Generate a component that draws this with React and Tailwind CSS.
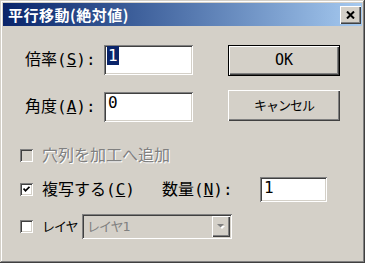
import React from "react";

const ui = "font-['DejaVu_Sans_Mono','Noto_Sans_CJK_JP',monospace]";
const sunken =
  "shadow-[inset_1px_1px_#808080,inset_-1px_-1px_#ffffff,inset_2px_2px_#404040,inset_-2px_-2px_#d4d0c8]";
const raised =
  "shadow-[inset_1px_1px_#ffffff,inset_-1px_-1px_#404040,inset_-2px_-2px_#808080]";

function CheckBox({ checked, disabled }) {
  return (
    <div
      className={`w-[13px] h-[13px] shrink-0 flex items-center justify-center ${sunken} ${
        disabled ? "bg-[#d4d0c8]" : "bg-white"
      }`}
    >
      {checked && (
        <svg width="7" height="7" viewBox="0 0 7 7">
          <path d="M0.5 2.5 L2.5 4.8 L6.5 0.8" fill="none" stroke="#000" strokeWidth="1.8" />
        </svg>
      )}
    </div>
  );
}

function Field({ width, height, children }) {
  return (
    <div className={`${width} ${height} bg-white ${sunken} pl-[3px] pt-[2px] text-[16px] leading-[17px] text-black`}>
      {children}
    </div>
  );
}

export default function App() {
  return (
    <div
      className={`w-[365px] h-[263px] bg-[#d4d0c8] p-[3px] flex flex-col ${ui} shadow-[inset_-1px_-1px_#404040,inset_1px_1px_#d4d0c8,inset_-2px_-2px_#808080,inset_2px_2px_#ffffff]`}
    >
      {/* title bar */}
      <div className="h-[23px] shrink-0 flex items-center bg-linear-to-r from-[#0a246a] to-[#a6caf0] pl-[5px] pr-[1px]">
        <span className="font-['Noto_Sans_CJK_JP',sans-serif] font-bold text-[15px] text-white leading-none tracking-[0.5px]">
          平行移動(絶対値)
        </span>
        <div className={`ml-auto w-[21px] h-[18px] bg-[#d4d0c8] flex items-center justify-center ${raised}`}>
          <svg width="9" height="8" viewBox="0 0 9 8">
            <path d="M1 0.5 L8 7.5 M8 0.5 L1 7.5" stroke="#000" strokeWidth="2" />
          </svg>
        </div>
      </div>

      {/* body */}
      <div className="flex-1 flex flex-col">
        <div className="mt-[19px] flex">
          <div className="ml-[22px] flex flex-col">
            <div className="flex items-start">
              <div className="w-[79px] h-[30px] flex items-center text-[16px] text-black">
                倍率(<u>S</u>):
              </div>
              <Field width="w-[89px]" height="h-[30px]">
                <span className="bg-[#0a246a] text-white px-[1px]">1</span>
              </Field>
            </div>
            <div className="mt-[17px] flex items-start">
              <div className="w-[79px] h-[30px] flex items-center text-[16px] text-black">
                角度(<u>A</u>):
              </div>
              <Field width="w-[89px]" height="h-[30px]">
                <span className="px-[1px]">0</span>
              </Field>
            </div>
          </div>
          <div className="ml-[35px] flex flex-col">
            <div className="w-[112px] h-[31px] border border-black">
              <div className={`w-full h-full flex items-center justify-center text-[15px] text-black ${raised}`}>
                OK
              </div>
            </div>
            <div
              className={`mt-[14px] w-[112px] h-[31px] flex items-center justify-center text-[13px] tracking-[-1px] text-black ${raised}`}
            >
              キャンセル
            </div>
          </div>
        </div>

        {/* checkbox rows */}
        <div className="mt-[21px] ml-[17px] h-[25px] flex items-center">
          <CheckBox disabled />
          <span className="ml-[9px] text-[16px] text-[#808080] [text-shadow:1px_1px_0_#ffffff]">
            穴列を加工へ追加
          </span>
        </div>

        <div className="mt-[9px] ml-[17px] h-[25px] flex items-center">
          <CheckBox checked />
          <span className="ml-[9px] w-[120px] text-[16px] text-black">
            複写する(<u>C</u>)
          </span>
          <span className="w-[98px] text-[16px] text-black">
            数量(<u>N</u>):
          </span>
          <Field width="w-[67px]" height="h-[25px]">
            <span className="px-[1px]">1</span>
          </Field>
        </div>

        <div className="mt-[12px] ml-[17px] h-[25px] flex items-center">
          <CheckBox />
          <span className="ml-[9px] w-[40px] shrink-0 whitespace-nowrap text-[13px] tracking-[-1px] text-black">
            レイヤ
          </span>
          <div className={`w-[150px] h-[25px] bg-[#d4d0c8] ${sunken} p-[2px] flex`}>
            <span className="flex-1 pl-[3px] whitespace-nowrap text-[13px] tracking-[-1px] leading-[21px] text-[#808080]">
              レイヤ1
            </span>
            <div className={`w-[18px] h-full flex items-center justify-center ${raised}`}>
              <svg width="8" height="5" viewBox="0 0 8 5">
                <path d="M1 1 L7 1 L4 4 Z" fill="#ffffff" transform="translate(1 1)" />
                <path d="M0 0 L7 0 L3.5 3.5 Z" fill="#808080" />
              </svg>
            </div>
          </div>
        </div>
      </div>
    </div>
  );
}
